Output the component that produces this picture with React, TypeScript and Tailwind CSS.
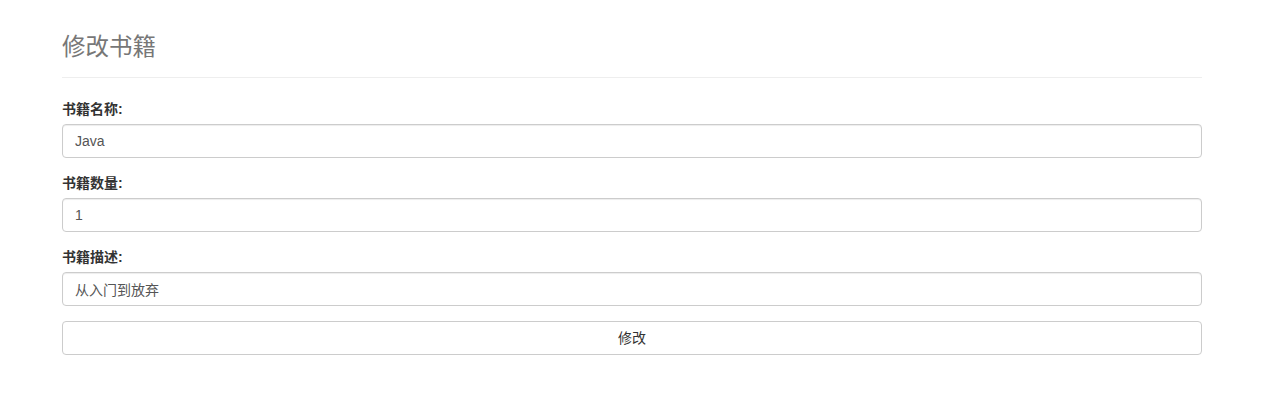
import React from "react";

const font = { fontFamily: '"Liberation Sans", "Noto Sans CJK SC", sans-serif' };

function Field({ label, value }: { label: string; value: string }) {
  return (
    <div className="mb-[15px]">
      <label className="block mb-[5px] text-[14px] leading-[20px] font-bold text-[#333]">{label}</label>
      <input
        readOnly
        value={value}
        className="block w-full h-[34px] px-[12px] py-[6px] text-[14px] leading-[20px] text-[#555] bg-white border border-[#ccc] rounded-[4px] shadow-[inset_0_1px_1px_rgba(0,0,0,0.075)] outline-none"
        style={font}
      />
    </div>
  );
}

export default function App() {
  return (
    <div className="bg-white min-h-[418px] w-full" style={font}>
      <div className="ml-[62px] w-[1140px] pt-[33px]">
        <div className="pb-[16px] border-b border-[#eee] mb-[21px]">
          <h1 className="text-[23.5px] leading-[28px] text-[#777] font-normal">修改书籍</h1>
        </div>
        <Field label="书籍名称:" value="Java" />
        <Field label="书籍数量:" value="1" />
        <Field label="书籍描述:" value="从入门到放弃" />
        <button className="block w-full h-[34px] text-[14px] leading-[20px] text-[#333] bg-white border border-[#ccc] rounded-[4px]">
          修改
        </button>
      </div>
    </div>
  );
}
